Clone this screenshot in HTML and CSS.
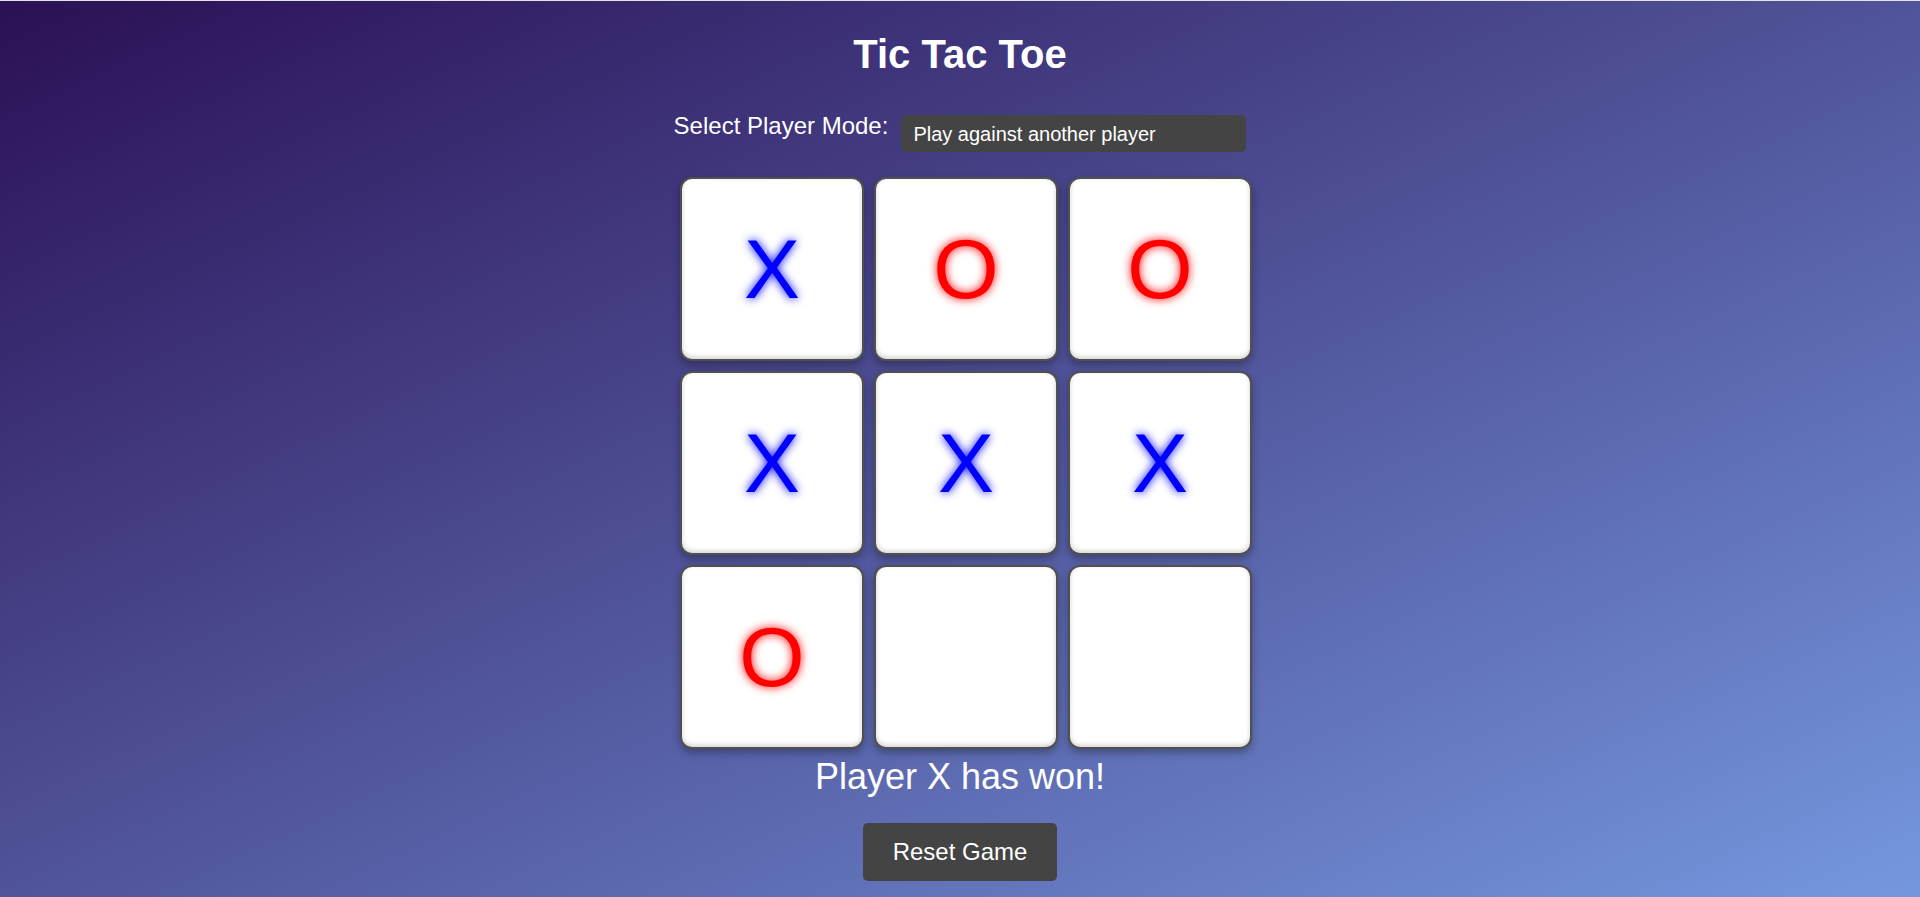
FILE: index.html
```html
<!DOCTYPE html>
<html lang="en">
<head>
<meta charset="utf-8">
<title>Tic Tac Toe</title>
<link rel="stylesheet" href="styles.css">
</head>
<body>
<main class="game">
  <h1 class="title">Tic Tac Toe</h1>
  <div class="mode-row">
    <label class="mode-label" for="mode">Select Player Mode:</label>
    <select class="mode-select" id="mode">
      <option>Play against another player</option>
      <option>Play against computer</option>
    </select>
  </div>
  <div class="board">
    <div class="cell x">X</div>
    <div class="cell o">O</div>
    <div class="cell o">O</div>
    <div class="cell x">X</div>
    <div class="cell x">X</div>
    <div class="cell x">X</div>
    <div class="cell o">O</div>
    <div class="cell"></div>
    <div class="cell"></div>
  </div>
  <p class="status">Player X has won!</p>
  <button class="reset" type="button">Reset Game</button>
</main>
</body>
</html>
```

FILE: styles.css
```css
html, body {
  margin: 0;
  padding: 0;
}

body {
  min-height: 100vh;
  box-sizing: border-box;
  border-top: 1px solid #e4e4e4;
  background: linear-gradient(to bottom right, #2b1055, #7597de);
  font-family: "Liberation Sans", Arial, sans-serif;
  color: #fff;
}

.game {
  display: flex;
  flex-direction: column;
  align-items: center;
}

.title {
  margin: 30px 0 0;
  font-size: 40px;
  font-weight: bold;
  line-height: 46px;
}

.mode-row {
  display: flex;
  align-items: flex-start;
  gap: 13px;
  margin-top: 35px;
}

.mode-label {
  font-size: 24px;
  line-height: 27.6px;
}

.mode-select {
  appearance: none;
  -webkit-appearance: none;
  margin-top: 3px;
  width: 345px;
  height: 37px;
  box-sizing: border-box;
  padding: 0 12px;
  border: none;
  border-radius: 5px;
  background: #444;
  color: #fff;
  font-family: "Liberation Sans", Arial, sans-serif;
  font-size: 20px;
}

.board {
  display: grid;
  grid-template-columns: repeat(3, 184px);
  grid-auto-rows: 184px;
  gap: 10px;
  margin-top: 25px;
  margin-left: 12px;
}

.cell {
  box-sizing: border-box;
  display: flex;
  align-items: center;
  justify-content: center;
  background: #fff;
  border: 2px solid #505050;
  border-radius: 12px;
  box-shadow: 0 4px 8px rgba(0, 0, 0, 0.3), inset 0 -2px 5px rgba(0, 0, 0, 0.18);
  font-size: 84px;
  line-height: 1;
}

.cell.x {
  color: #0000ff;
  text-shadow: 0 0 10px #0000ff;
}

.cell.o {
  color: #ff0000;
  text-shadow: 0 0 10px #ff0000;
}

.status {
  margin: 7px 0 0;
  font-size: 36px;
  line-height: 41.4px;
}

.reset {
  margin-top: 26px;
  padding: 15px 30px;
  border: none;
  border-radius: 5px;
  background: #444;
  color: #fff;
  font-family: "Liberation Sans", Arial, sans-serif;
  font-size: 24px;
  line-height: 27.6px;
}
```
